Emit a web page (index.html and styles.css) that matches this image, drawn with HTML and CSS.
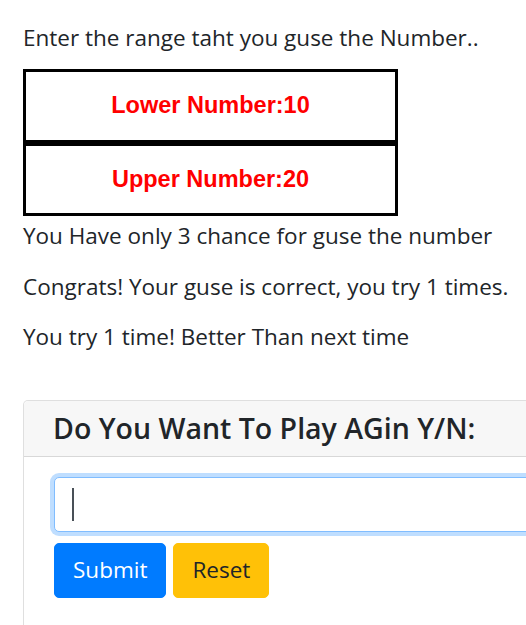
FILE: index.html
```html
<!DOCTYPE html>
<html lang="en">
<head>
<meta charset="utf-8">
<title>Guess the Number</title>
<link rel="stylesheet" href="styles.css">
</head>
<body>
<div class="container">
  <p class="intro">Enter the range taht you guse the Number..</p>
  <div class="range">
    <div class="range-box">Lower Number:10</div>
    <div class="range-box">Upper Number:20</div>
  </div>
  <p class="msg">You Have only 3 chance for guse the number</p>
  <p class="msg">Congrats! Your guse is correct, you try 1 times.</p>
  <p class="msg">You try 1 time! Better Than next time</p>

  <div class="card">
    <div class="card-header">
      <h3 class="card-title">Do You Want To Play AGin Y/N:</h3>
    </div>
    <div class="card-body">
      <div class="field">
        <input class="form-control focused" type="text" aria-label="Play again">
        <span class="caret"></span>
      </div>
      <div class="actions">
        <button class="btn btn-primary" type="button">Submit</button>
        <button class="btn btn-warning" type="button">Reset</button>
      </div>
    </div>
  </div>
</div>
</body>
</html>
```
FILE: styles.css
```css
html {
  overflow: hidden;
}
body {
  margin: 0;
  background: #fff;
  color: #212529;
  font-family: "Open Sans", "Noto Sans", sans-serif;
  font-size: 22.5px;
  line-height: 34px;
}
.container {
  padding: 21px 0 0 23px;
  width: 720px;
}
p {
  margin: 0;
}
.intro {
  margin-bottom: 14px;
}
.range {
  width: 375px;
  margin-bottom: 3px;
}
.range-box {
  box-sizing: border-box;
  height: 74px;
  border: 3px solid #000;
  display: flex;
  align-items: center;
  justify-content: center;
  color: #ff0000;
  font-family: "Liberation Sans", Arial, sans-serif;
  font-weight: bold;
  font-size: 23.5px;
  line-height: 1;
}
.range-box + .range-box {
  height: 73px;
}
.msg {
  margin-bottom: 16.5px;
}
.card {
  margin-top: 45.5px;
  border: 1px solid rgba(0, 0, 0, 0.125);
  border-radius: 5px;
  background: #fff;
  min-height: 260px;
}
.card-header {
  box-sizing: border-box;
  height: 56px;
  display: flex;
  align-items: center;
  padding: 0 29px;
  background: #f7f7f7;
  border-bottom: 1px solid rgba(0, 0, 0, 0.125);
  border-radius: 5px 5px 0 0;
}
.card-title {
  margin: 0;
  font-size: 28.5px;
  font-weight: 600;
  line-height: 1.2;
  color: #212529;
}
.card-body {
  padding: 20px 30px;
}
.field {
  position: relative;
}
.form-control {
  display: block;
  box-sizing: border-box;
  width: 100%;
  height: 55px;
  padding: 0 18px;
  border: 1px solid #ced4da;
  border-radius: 5px;
  font: inherit;
  color: #495057;
  background: #fff;
  outline: none;
}
.form-control.focused {
  border-color: #80bdff;
  box-shadow: 0 0 0 4px rgba(0, 123, 255, 0.25);
}
.caret {
  position: absolute;
  left: 18px;
  top: 11px;
  width: 2px;
  height: 33px;
  background: #495057;
}
.actions {
  display: flex;
  gap: 7px;
  margin-top: 11px;
}
.btn {
  box-sizing: border-box;
  height: 55px;
  padding: 0 18px;
  border: 1px solid transparent;
  border-radius: 5px;
  font: inherit;
  cursor: pointer;
}
.btn-primary {
  background: #007bff;
  border-color: #007bff;
  color: #fff;
}
.btn-warning {
  background: #ffc107;
  border-color: #ffc107;
  color: #212529;
}
```
